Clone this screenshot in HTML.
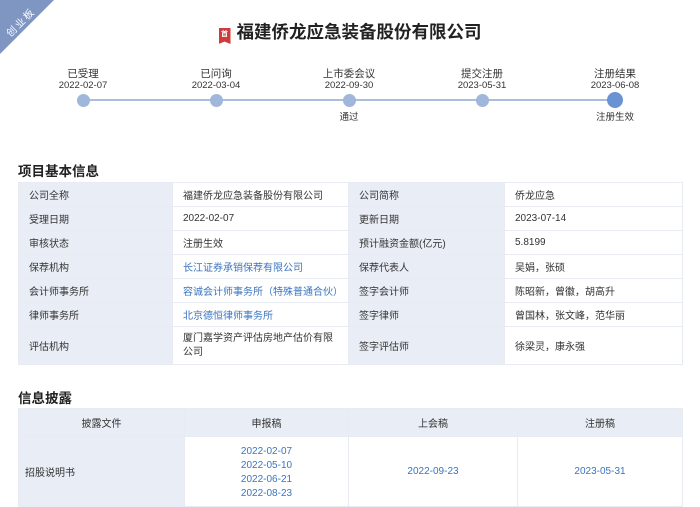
<!DOCTYPE html>
<html><head><meta charset="utf-8"><style>
*{margin:0;padding:0;box-sizing:border-box}
body{width:700px;height:503px;overflow:hidden;background:#fff;font-family:"Liberation Sans","Noto Sans CJK SC",sans-serif;color:#333;position:relative}
.corner{position:absolute;left:0;top:0;width:0;height:0;border-top:54px solid #7f95c2;border right:0;border-right:54px solid transparent}
.ctext{position:absolute;left:2px;top:14px;transform:rotate(-45deg);color:#fff;font-size:10px;letter-spacing:2px}
.title{position:absolute;top:19px;left:0;width:700px;text-align:center;font-size:17.5px;font-weight:bold;color:#222}
.badge{display:inline-block;width:12px;height:16px;background:#d03a3a;color:#fff;font-size:7px;line-height:14px;vertical-align:2px;margin-right:6px;text-align:center;clip-path:polygon(0 0,100% 0,100% 100%,50% 85%,0 100%)}
.tl{position:absolute;top:99px;left:83px;width:532px;height:2px;background:#a9bedc}
.dot{position:absolute;width:13px;height:13px;border-radius:50%;background:#a0b6da;top:94px}
.lab{position:absolute;width:120px;text-align:center;font-size:10.5px;color:#333}
.d{font-size:9.5px}
h2{position:absolute;left:18px;font-size:13.5px;font-weight:bold;color:#222}
table{position:absolute;border-collapse:collapse;font-size:10px;table-layout:fixed}
td{border:1px solid #e8ecf2;padding:0 0 0 10px;white-space:nowrap;overflow:hidden}
td.k{background:#e9eef6}
a{color:#3a74c0;text-decoration:none}
.t2 td{text-align:center;padding:0}
</style></head><body>
<div class="corner"></div><div class="ctext">创业板</div>
<div class="title"><span class="badge">首</span>福建侨龙应急装备股份有限公司</div>
<div class="tl"></div>
<div class="dot" style="left:77px"></div>
<div class="dot" style="left:210px"></div>
<div class="dot" style="left:343px"></div>
<div class="dot" style="left:476px"></div>
<div class="dot" style="left:607px;top:92px;width:16px;height:16px;background:#6b93d4"></div>
<div class="lab" style="left:23px;top:66px">已受理</div><div class="lab d" style="left:23px;top:80px">2022-02-07</div>
<div class="lab" style="left:156px;top:66px">已问询</div><div class="lab d" style="left:156px;top:80px">2022-03-04</div>
<div class="lab" style="left:289px;top:66px">上市委会议</div><div class="lab d" style="left:289px;top:80px">2022-09-30</div><div class="lab" style="left:289px;top:109px;font-size:9.5px">通过</div>
<div class="lab" style="left:422px;top:66px">提交注册</div><div class="lab d" style="left:422px;top:80px">2023-05-31</div>
<div class="lab" style="left:555px;top:66px">注册结果</div><div class="lab d" style="left:555px;top:80px">2023-06-08</div><div class="lab" style="left:555px;top:109px;font-size:9.5px">注册生效</div>
<h2 style="top:160px">项目基本信息</h2>
<table style="left:18px;top:182px;width:664px">
<colgroup><col style="width:154px"><col style="width:176px"><col style="width:156px"><col style="width:178px"></colgroup>
<tr style="height:24px"><td class="k">公司全称</td><td>福建侨龙应急装备股份有限公司</td><td class="k">公司简称</td><td>侨龙应急</td></tr>
<tr style="height:24px"><td class="k">受理日期</td><td>2022-02-07</td><td class="k">更新日期</td><td>2023-07-14</td></tr>
<tr style="height:24px"><td class="k">审核状态</td><td>注册生效</td><td class="k">预计融资金额(亿元)</td><td>5.8199</td></tr>
<tr style="height:24px"><td class="k">保荐机构</td><td><a>长江证券承销保荐有限公司</a></td><td class="k">保荐代表人</td><td>吴娟，张硕</td></tr>
<tr style="height:24px"><td class="k">会计师事务所</td><td><a>容诚会计师事务所（特殊普通合伙）</a></td><td class="k">签字会计师</td><td>陈昭新，曾徽，胡高升</td></tr>
<tr style="height:24px"><td class="k">律师事务所</td><td><a>北京德恒律师事务所</a></td><td class="k">签字律师</td><td>曾国林，张文峰，范华丽</td></tr>
<tr style="height:38px"><td class="k">评估机构</td><td style="line-height:14px;white-space:normal;padding-right:6px">厦门嘉学资产评估房地产估价有限公司</td><td class="k">签字评估师</td><td>徐梁灵，康永强</td></tr>
</table>
<h2 style="top:387px">信息披露</h2>
<table class="t2" style="left:18px;top:408px;width:664px">
<colgroup><col style="width:166px"><col style="width:164px"><col style="width:169px"><col style="width:165px"></colgroup>
<tr style="height:28px" ><td class="k">披露文件</td><td class="k">申报稿</td><td class="k">上会稿</td><td class="k">注册稿</td></tr>
<tr style="height:70px"><td class="k" style="text-align:left;padding-left:6px">招股说明书</td><td style="line-height:14px;padding-top:2px"><a>2022-02-07<br>2022-05-10<br>2022-06-21<br>2022-08-23</a></td><td><a>2022-09-23</a></td><td><a>2023-05-31</a></td></tr>
</table>
</body></html>
